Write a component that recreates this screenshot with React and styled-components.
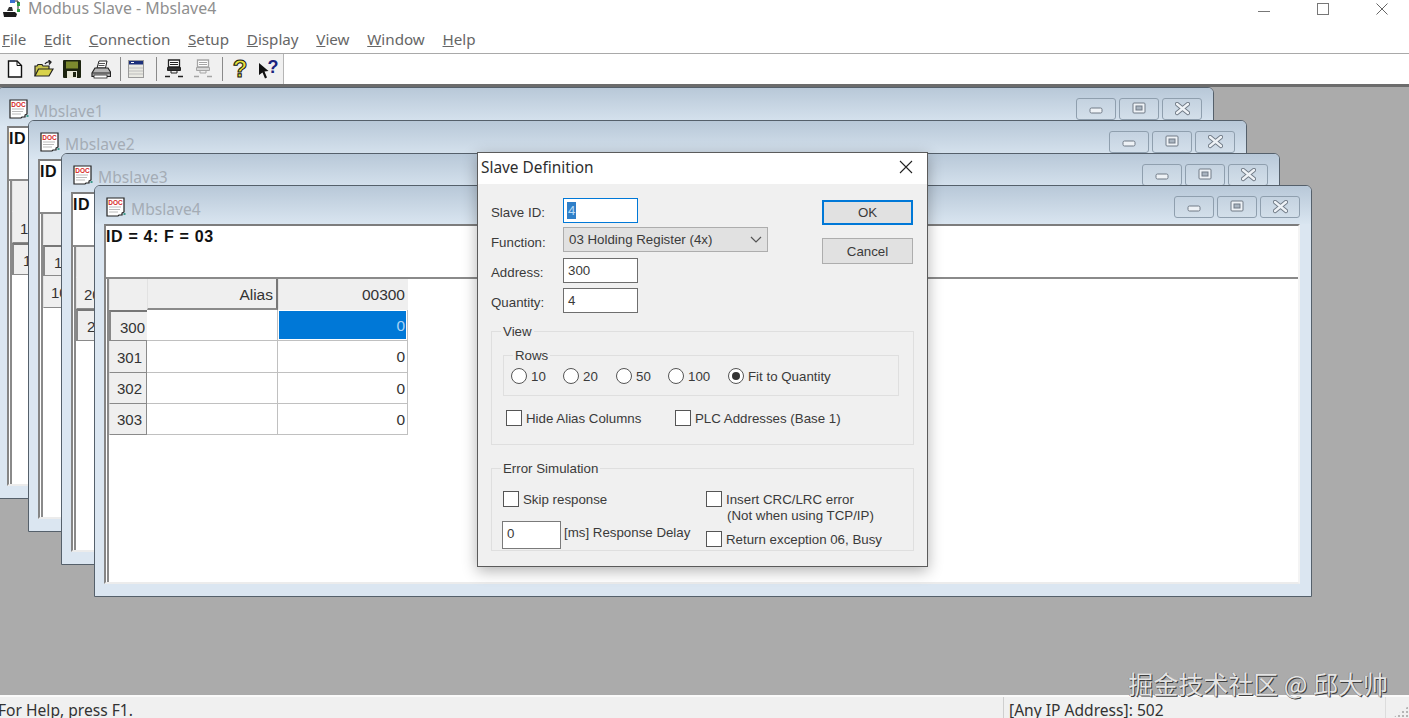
// Packages
import styled, { createGlobalStyle } from 'styled-components';

const MENUS = ['File', 'Edit', 'Connection', 'Setup', 'Display', 'View', 'Window', 'Help'];

const SLAVES = [
  { name: 'Mbslave1', id: 1, base: 100, left: -3, top: 0, width: 1217, selected: 1 },
  { name: 'Mbslave2', id: 2, base: 100, left: 28, top: 33, width: 1219, selected: 0 },
  { name: 'Mbslave3', id: 3, base: 200, left: 61, top: 66, width: 1219, selected: 1 },
  { name: 'Mbslave4', id: 4, base: 300, left: 94, top: 98, width: 1218, selected: 0, rows: 4 },
];

const RADIOS = [
  { label: '10', width: 52 },
  { label: '20', width: 53 },
  { label: '50', width: 52 },
  { label: '100', width: 60 },
  { label: 'Fit to Quantity', width: 120, checked: true },
];

// Icons
const AppIcon = () => (
  <svg width="18" height="17" viewBox="0 0 18 17">
    <path d="M0 12h12l2 2-1 3H1z" fill="#1c1c1c" />
    <path d="M4 11l2-4h3l1 4z" fill="#333" />
    <rect x="7" y="0" width="5" height="3" fill="#3a6fd0" />
    <rect x="14" y="2" width="3" height="4" fill="#2f9e44" />
    <rect x="14" y="9" width="3" height="3" fill="#2f9e44" />
    <path d="M12 1h3v2M15 6v3" fill="none" stroke="#222" />
  </svg>
);

const NewIcon = () => (
  <svg width="16" height="18" viewBox="0 0 16 18">
    <path d="M1.500 1h8.500l4.500 4.500V17h-13z" fill="#fff" stroke="#111" strokeWidth="1.400" />
    <path d="M10 1v4.500h4.500" fill="none" stroke="#111" />
  </svg>
);

const OpenIcon = () => (
  <svg width="20" height="18" viewBox="0 0 20 18">
    <path d="M1 16V6h2l1-1.500h4L9 6h6v3" fill="#c9c44d" stroke="#222" strokeWidth="1.200" />
    <path d="M1 16l3.500-7H19l-4 7z" fill="#d8d24a" stroke="#222" strokeWidth="1.200" />
    <path d="M11 4c1-2 3-2.500 5-2M14.500 0l2.500 2-2 2.500" fill="none" stroke="#222" strokeWidth="1.300" />
  </svg>
);

const SaveIcon = () => (
  <svg width="18" height="18" viewBox="0 0 18 18">
    <rect width="18" height="18" rx="1" fill="#1d2410" />
    <rect x="3" y="1.500" width="12" height="7" fill="#7c8a2e" />
    <rect x="4" y="11" width="10" height="7" fill="#e8e8d8" />
    <rect x="10" y="12" width="3" height="5" fill="#1d2410" />
  </svg>
);

const PrintIcon = () => (
  <svg width="20" height="19" viewBox="0 0 20 19">
    <path d="M6 8l2-7h8l-1.500 7z" fill="#fff" stroke="#222" />
    <path d="M8 3.500h6M7.500 5.500h6" stroke="#555" />
    <path d="M1 13l3-5h13l2.500 4v4.500H1z" fill="#b5b5b5" stroke="#222" strokeWidth="1.200" />
    <path d="M1.500 13h17.500" stroke="#222" />
    <rect x="3" y="15" width="13" height="3" fill="#fff" stroke="#222" strokeWidth=".8" />
  </svg>
);

const FormIcon = () => (
  <svg width="16" height="18" viewBox="0 0 16 18">
    <rect x=".5" y=".5" width="15" height="17" fill="#e9e9e2" stroke="#9a9a9a" />
    <rect x="1" y="1" width="14" height="3.500" fill="#1b2f7a" />
    <path d="M3 2.500h3" stroke="#fff" />
    <path d="M1 8h14M1 11h14M1 14h14" stroke="#bdbdbd" />
  </svg>
);

const LinkIcon = ({ color, base }) => (
  <svg width="20" height="20" viewBox="0 0 20 20">
    <path d="M4.500 1h11v7h-11z" fill="#fff" stroke={color} strokeWidth="1.300" />
    <path d="M6 3.500h8M6 5.500h8" stroke={color} />
    <path d="M3.500 8.500h13v3h-13z" fill={base} stroke={color} />
    <path d="M7 12v2h6v-2" fill="none" stroke={color} />
    <path d="M1 17.500h5M14 17.500h5" stroke={color} strokeWidth="1.500" />
  </svg>
);

const HelpIcon = () => (
  <svg width="16" height="24" viewBox="0 0 16 24">
    <text x="8" y="20" textAnchor="middle" fontFamily="Liberation Sans" fontWeight="700" fontSize="24" fill="#e6e23a" stroke="#111" strokeWidth="1">?</text>
  </svg>
);

const WhatsThisIcon = () => (
  <svg width="21" height="22" viewBox="0 0 21 22">
    <path d="M1 5l9.500 8-4 .5 2.500 6-2 1-2.500-6L1 17z" fill="#111" />
    <text x="15" y="15" textAnchor="middle" fontFamily="Liberation Sans" fontWeight="700" fontSize="18" fill="#1a237e">?</text>
  </svg>
);

const DocIcon = () => (
  <svg width="20" height="20" viewBox="0 0 20 20">
    <path d="M1 1h17v14l-2 1v2h-3l-1 1H1z" fill="#fff" stroke="#222" strokeWidth="1.200" />
    <text x="9.500" y="7.500" textAnchor="middle" fontFamily="Liberation Sans" fontWeight="700" fontSize="6.500" fill="#d61f26">DOC</text>
    <path d="M3 10h12M3 12.500h11M3 15h9" stroke="#bbb" />
    <rect x="17.500" y="16" width="2" height="2" fill="#3d9a8b" />
  </svg>
);

const ButtonGlyph = ({ kind }) => {
  if (kind === 'min') {
    return (
      <svg width="14" height="14" viewBox="0 0 14 14">
        <rect x="1" y="6" width="12" height="5" rx="1.500" fill="#eef2f6" stroke="#707a86" />
      </svg>
    );
  }
  if (kind === 'max') {
    return (
      <svg width="14" height="14" viewBox="0 0 14 14">
        <rect x="1" y="1" width="12" height="10" rx="1" fill="#eef2f6" stroke="#707a86" />
        <rect x="4" y="4" width="6" height="4" fill="#a9b4c0" stroke="#707a86" />
      </svg>
    );
  }
  return (
    <svg width="15" height="14" viewBox="0 0 15 14">
      <path d="M2 2l11 9M13 2L2 11" stroke="#707a86" strokeWidth="4.200" strokeLinecap="round" />
      <path d="M2 2l11 9M13 2L2 11" stroke="#eef2f6" strokeWidth="2.400" strokeLinecap="round" />
    </svg>
  );
};

const GridRow = ({ label, selected }) => (
  <>
    <RowHead $selected={selected}>{label}</RowHead>
    <DataCell />
    <DataCell $selected={selected}>0</DataCell>
  </>
);

const SlaveWindow = ({ name, id, base, left, top, width, selected, rows = 2 }) => (
  <WindowFrame style={{ left, top, width }}>
    <WindowTitle>
      <DocIcon />
      <WindowName>{name}</WindowName>
      <WindowButtons>
        <WindowButton><ButtonGlyph kind="min" /></WindowButton>
        <WindowButton><ButtonGlyph kind="max" /></WindowButton>
        <WindowButton><ButtonGlyph kind="close" /></WindowButton>
      </WindowButtons>
    </WindowTitle>
    <Client>
      <InfoLine>{`ID = ${id}: F = 03`}</InfoLine>
      <GridPane>
        <DataGrid>
          <HeadCell />
          <HeadCell $raised>Alias</HeadCell>
          <HeadCell>{String(base).padStart(5, '0')}</HeadCell>
          {Array.from({ length: rows }, (_, i) => (
            <GridRow key={i} label={base + i} selected={i === selected} />
          ))}
        </DataGrid>
      </GridPane>
    </Client>
  </WindowFrame>
);

const Check = ({ children }) => (
  <CheckRow>
    <CheckBox />
    <CheckText>{children}</CheckText>
  </CheckRow>
);

const App = () => (
  <Page>
    <GlobalStyle />
    <TitleBar>
      <AppIcon />
      <AppName>Modbus Slave - Mbslave4</AppName>
      <Controls>
        <svg width="12" height="12" viewBox="0 0 12 12"><path d="M0 8.500h12" stroke="#777" /></svg>
        <svg width="12" height="12" viewBox="0 0 12 12"><rect x=".5" y=".5" width="11" height="11" fill="none" stroke="#777" /></svg>
        <svg width="12" height="12" viewBox="0 0 12 12"><path d="M.5.5l11 11M11.500.5l-11 11" stroke="#666" /></svg>
      </Controls>
    </TitleBar>
    <MenuBar>
      {MENUS.map((m) => (
        <MenuItem key={m}><u>{m[0]}</u>{m.slice(1)}</MenuItem>
      ))}
    </MenuBar>
    <ToolBar>
      <ToolStrip>
        <Tool><NewIcon /></Tool>
        <Tool><OpenIcon /></Tool>
        <Tool><SaveIcon /></Tool>
        <Tool><PrintIcon /></Tool>
        <ToolSep $after={1} />
        <Tool><FormIcon /></Tool>
        <ToolSep $before={5.5} />
        <Tool><LinkIcon color="#222" base="#333" /></Tool>
        <Tool><LinkIcon color="#a5a5a5" base="#d8d8d8" /></Tool>
        <ToolSep $before={4.5} />
        <Tool><HelpIcon /></Tool>
        <Tool><WhatsThisIcon /></Tool>
      </ToolStrip>
    </ToolBar>
    <Desktop>
      {SLAVES.map((s) => <SlaveWindow key={s.name} {...s} />)}
    </Desktop>
    <StatusBar>
      <StatusHelp>For Help, press F1.</StatusHelp>
      <StatusPort>[Any IP Address]: 502</StatusPort>
      <StatusGrip />
    </StatusBar>

    <Watermark>掘金技术社区 @ 邱大帅</Watermark>

    <Dialog>
      <DialogTitle>
        <span>Slave Definition</span>
        <svg width="14" height="14" viewBox="0 0 14 14"><path d="M1 1l12 12M13 1L1 13" stroke="#222" strokeWidth="1.100" /></svg>
      </DialogTitle>
      <DialogBody>
        <TopSection>
          <FieldGrid>
            <FieldLabel>Slave ID:</FieldLabel>
            <TextField $focused><Selected>4</Selected></TextField>
            <FieldLabel>Function:</FieldLabel>
            <SelectField>
              <span>03 Holding Register (4x)</span>
              <svg width="12" height="8" viewBox="0 0 12 8"><path d="M1 1l5 5 5-5" fill="none" stroke="#555" strokeWidth="1.200" /></svg>
            </SelectField>
            <FieldLabel>Address:</FieldLabel>
            <TextField>300</TextField>
            <FieldLabel>Quantity:</FieldLabel>
            <TextField>4</TextField>
          </FieldGrid>
          <ButtonColumn>
            <DialogButton $primary>OK</DialogButton>
            <DialogButton>Cancel</DialogButton>
          </ButtonColumn>
        </TopSection>

        <ViewGroup>
          <Legend>View</Legend>
          <RowsGroup>
            <Legend>Rows</Legend>
            {RADIOS.map((r) => (
              <RadioItem key={r.label} $width={r.width}>
                <Radio $checked={r.checked} />
                <CheckText>{r.label}</CheckText>
              </RadioItem>
            ))}
          </RowsGroup>
          <ViewChecks>
            <CheckSlot $width={169}><Check>Hide Alias Columns</Check></CheckSlot>
            <Check>PLC Addresses (Base 1)</Check>
          </ViewChecks>
        </ViewGroup>

        <ErrorGroup>
          <Legend>Error Simulation</Legend>
          <ErrorLeft>
            <Check>Skip response</Check>
            <DelayRow>
              <DelayField>0</DelayField>
              <DelayLabel>[ms] Response Delay</DelayLabel>
            </DelayRow>
          </ErrorLeft>
          <ErrorRight>
            <Check>
              Insert CRC/LRC error
              <CheckNote>(Not when using TCP/IP)</CheckNote>
            </Check>
            <Check>Return exception 06, Busy</Check>
          </ErrorRight>
        </ErrorGroup>
      </DialogBody>
    </Dialog>
  </Page>
);

const GlobalStyle = createGlobalStyle`
  html, body {
    margin: 0;
    height: 100%;
    overflow: hidden;
    background: #fff;
  }
  * {
    box-sizing: border-box;
  }
`;

const Page = styled.div`
  position: relative;
  width: 1409px;
  height: 718px;
  overflow: hidden;

  display: flex;
  flex-direction: column;

  font-family: 'Liberation Sans', Arial, sans-serif;
`;

const TitleBar = styled.div`
  height: 17px;
  padding: 0 21px 0 3px;
  flex-shrink: 0;

  display: flex;
  align-items: center;
  background: #fff;
`;

const AppName = styled.span`
  margin-left: 7px;
  font-family: 'Noto Sans', sans-serif;
  font-size: 15.9px;
  line-height: 17px;
  color: #8f8f8f;
`;

const Controls = styled.div`
  margin-left: auto;
  display: flex;
  gap: 47px;
`;

const MenuBar = styled.div`
  height: 37px;
  padding: 7px 0 0 2px;
  flex-shrink: 0;

  display: flex;
  align-items: center;
  gap: 17.7px;

  background: #fff;
  border-bottom: 1px solid #a9a9a9;
`;

const MenuItem = styled.span`
  font-family: 'Noto Sans', sans-serif;
  font-size: 15.2px;
  color: #666;
`;

const ToolBar = styled.div`
  height: 33px;
  flex-shrink: 0;
  background: #fff;
  border-bottom: 3px solid #6c6c6c;
`;

const ToolStrip = styled.div`
  width: 284px;
  height: 100%;
  padding-left: 1px;

  display: flex;
  align-items: center;

  background: #f0f0f0;
  border-right: 1px solid #b5b5b5;
`;

const Tool = styled.div`
  width: 28.5px;
  height: 100%;

  display: flex;
  align-items: center;
  justify-content: center;
`;

const ToolSep = styled.div`
  width: 1px;
  height: 24px;
  margin-left: ${(p) => p.$before ?? 5}px;
  margin-right: ${(p) => p.$after ?? 3}px;
  background: #8a8a8a;
`;

const Desktop = styled.div`
  position: relative;
  flex: 1;
  overflow: hidden;
  background: #ababab;
`;

const WindowFrame = styled.div`
  position: absolute;
  height: 412px;
  padding: 0 11px 12px 9px;

  display: flex;
  flex-direction: column;

  background: #dbe6f1;
  border: 1px solid #55606b;
  border-radius: 6px 6px 0 0;
`;

const WindowTitle = styled.div`
  height: 38px;
  margin: 0 -11px 0 -9px;
  padding: 4px 11px 0 11px;
  flex-shrink: 0;

  display: flex;
  align-items: center;
  gap: 5px;

  background: linear-gradient(#b8c8d8, #d9e5f0);
  border-radius: 5px 5px 0 0;
`;

const WindowName = styled.span`
  margin-top: 3px;
  font-family: 'Noto Sans', sans-serif;
  font-size: 15.6px;
  color: #a4acb5;
`;

const WindowButtons = styled.div`
  margin-left: auto;
  display: flex;
  gap: 3px;
`;

const WindowButton = styled.div`
  width: 40px;
  height: 22px;

  display: flex;
  align-items: center;
  justify-content: center;

  background: linear-gradient(#c4d2e0, #d3dfea);
  border: 1px solid #8f9fae;
  border-radius: 3px;
`;

const Client = styled.div`
  flex: 1;
  min-height: 0;
  display: flex;
  flex-direction: column;

  background: #fff;
  border: 2px solid;
  border-color: #7d7d7d #f4f4f4 #ececec #858585;
`;

const InfoLine = styled.div`
  height: 53px;
  padding-top: 2px;
  flex-shrink: 0;

  font-size: 16px;
  font-weight: 700;
  letter-spacing: 0.65px;
  line-height: 18px;
  color: #111;
  border-bottom: 2px solid #8a8a8a;
`;

const GridPane = styled.div`
  flex: 1;
  margin-left: 1px;
  border-left: 2px solid #8a8a8a;
`;

const DataGrid = styled.div`
  display: grid;
  grid-template-columns: 38px 131px 130px;
  grid-auto-rows: 31.2px;
  width: 299px;

  font-size: 15.5px;
  color: #333;
`;

const HeadCell = styled.div`
  padding: 2px 3px 0 0;

  display: flex;
  align-items: center;
  justify-content: flex-end;

  background: #efefef;
  border-right: ${(p) => (p.$raised ? '2px solid #777' : '0')};
  border-bottom: 2px solid ${(p) => (p.$raised ? '#8a8a8a' : '#efefef')};
  border-left: 1px solid #e2e2e2;
`;

const RowHead = styled.div`
  padding: 2px ${(p) => (p.$selected ? '2px' : '4px')} 0 0;

  display: flex;
  align-items: center;
  justify-content: flex-end;

  font-size: 15px;
  background: #efefef;
  border-right: ${(p) => (p.$selected ? '0' : '1px solid #8a8a8a')};
  border-bottom: 1px solid #8a8a8a;
  border-top: ${(p) => (p.$selected ? '2px solid #777' : '0')};
  border-left: ${(p) => (p.$selected ? '2px solid #888' : '1px solid #e2e2e2')};
`;

const DataCell = styled.div`
  padding: 2px 2px 0 0;

  display: flex;
  align-items: center;
  justify-content: flex-end;

  color: ${(p) => (p.$selected ? '#a9d3f5' : '#333')};
  background: ${(p) => (p.$selected ? '#0078d7' : '#fff')};
  border-right: 1px solid #c0c0c0;
  border-bottom: 1px solid #c0c0c0;
  ${(p) => p.$selected && 'box-shadow: inset 0 0 0 1px #fff;'}
`;

const Watermark = styled.div`
  position: absolute;
  right: 21px;
  top: 668px;

  font-family: 'Noto Sans CJK SC', sans-serif;
  font-size: 25px;
  line-height: 30px;
  color: #e4e4e4;
  text-shadow: 1px 1px 0 #3c3c3c, -0.5px -0.5px 0 #777;
`;

const StatusBar = styled.div`
  height: 23px;
  flex-shrink: 0;

  display: flex;
  align-items: flex-end;

  font-family: 'Noto Sans', sans-serif;
  font-size: 15.6px;
  line-height: 17px;
  color: #333;
  background: #f0f0f0;
  border-top: 2px solid #fafafa;
`;

const StatusHelp = styled.span`
  width: 1005px;
  margin-left: -2px;
  margin-bottom: -1px;
  flex-shrink: 0;
`;

const StatusPort = styled.span`
  width: 383px;
  height: 100%;
  padding: 5px 0 0 5px;
  flex-shrink: 0;

  border-left: 1px solid #cfcfcf;
  border-right: 1px solid #dcdcdc;
`;

const StatusGrip = styled.span`
  flex: 1;
  height: 100%;
  background: radial-gradient(circle at 2px 2px, #b5b5b5 1px, transparent 1.2px) right bottom / 4px 4px;
  clip-path: polygon(100% 40%, 100% 100%, 30% 100%);
`;

const Dialog = styled.div`
  position: absolute;
  left: 477px;
  top: 152px;
  width: 451px;
  height: 415px;

  display: flex;
  flex-direction: column;

  background: #f0f0f0;
  border: 1px solid #5b5b5b;
  box-shadow: 0 4px 14px rgba(0, 0, 0, 0.3);
  font-size: 13.3px;
  color: #3a3a3a;
`;

const DialogTitle = styled.div`
  height: 31px;
  padding: 0 14px 3px 3px;
  flex-shrink: 0;

  display: flex;
  align-items: center;
  justify-content: space-between;

  font-family: 'Noto Sans', sans-serif;
  font-size: 15.4px;
  color: #2e2e2e;
  background: #fff;
`;

const DialogBody = styled.div`
  flex: 1;
  padding: 14px 13px 0;
  display: flex;
  flex-direction: column;
`;

const TopSection = styled.div`
  display: flex;
  justify-content: space-between;
`;

const FieldGrid = styled.div`
  display: grid;
  grid-template-columns: 72px auto;
  grid-auto-rows: 25px;
  row-gap: 5px;
  align-items: center;
`;

const FieldLabel = styled.span`
  padding-top: 4px;
`;

const TextField = styled.div`
  width: 75px;
  height: 25px;
  padding: 0 0 1px ${(p) => (p.$focused ? '3px' : '4px')};

  display: flex;
  align-items: center;

  background: #fff;
  border: 1px solid ${(p) => (p.$focused ? '#0078d7' : '#6e6e6e')};
`;

const Selected = styled.span`
  padding: 0 1px;
  line-height: 17px;
  color: #b9dcf7;
  background: #2f7fc8;
`;

const SelectField = styled.div`
  width: 205px;
  height: 25px;
  margin-top: -2px;
  padding: 0 5px 0 5px;

  display: flex;
  align-items: center;
  justify-content: space-between;

  background: #e1e1e1;
  border: 1px solid #adadad;
`;

const ButtonColumn = styled.div`
  margin: 2px 1px 0 0;
  display: flex;
  flex-direction: column;
  gap: 13px;
`;

const DialogButton = styled.div`
  width: 91px;
  height: ${(p) => (p.$primary ? '25px' : '26px')};

  display: flex;
  align-items: center;
  justify-content: center;

  background: #e1e1e1;
  border: ${(p) => (p.$primary ? '2px solid #0078d7' : '1px solid #adadad')};
`;

const Group = styled.div`
  position: relative;
  border: 1px solid #dfdfdf;
`;

const Legend = styled.span`
  position: absolute;
  top: -9px;
  left: 9px;
  padding: 0 2px;
  line-height: 18px;
  background: #f0f0f0;
`;

const ViewGroup = styled(Group)`
  height: 114px;
  margin-top: 18px;
  padding: 23px 14px 0 11px;
`;

const RowsGroup = styled(Group)`
  height: 41px;
  padding-left: 7px;

  display: flex;
  align-items: center;
`;

const RadioItem = styled.label`
  width: ${(p) => p.$width}px;
  flex-shrink: 0;

  display: flex;
  align-items: center;
  gap: 4px;
`;

const Radio = styled.span`
  width: 16px;
  height: 16px;
  flex-shrink: 0;

  display: flex;
  align-items: center;
  justify-content: center;

  background: #fff;
  border: 1px solid #555;
  border-radius: 50%;

  &::after {
    content: '';
    width: 8px;
    height: 8px;
    border-radius: 50%;
    background: ${(p) => (p.$checked ? '#333' : 'transparent')};
  }
`;

const ViewChecks = styled.div`
  margin-top: 14px;
  padding-left: 3px;
  display: flex;
`;

const CheckSlot = styled.div`
  width: ${(p) => p.$width}px;
`;

const CheckRow = styled.div`
  display: flex;
  align-items: flex-start;
  gap: 4px;
  line-height: 16px;
`;

const CheckText = styled.span`
  padding-top: 1px;
`;

const CheckNote = styled.span`
  display: block;
  padding-left: 1px;
`;

const CheckBox = styled.span`
  width: 16px;
  height: 16px;
  flex-shrink: 0;
  background: #fff;
  border: 1px solid #555;
`;

const ErrorGroup = styled(Group)`
  height: 83px;
  margin-top: 23px;
  padding: 22px 0 0 10px;
  display: flex;
`;

const ErrorLeft = styled.div`
  width: 204px;
  padding-left: 1px;

  display: flex;
  flex-direction: column;
  gap: 13px;
`;

const DelayRow = styled.div`
  margin-left: -1px;
  display: flex;
  align-items: center;
  gap: 3px;
`;

const DelayLabel = styled.span`
  margin-top: -5px;
`;

const DelayField = styled.div`
  width: 59px;
  height: 28px;
  padding: 0 0 4px 4px;

  display: flex;
  align-items: center;

  background: #fff;
  border: 1px solid #7a7a7a;
`;

const ErrorRight = styled.div`
  display: flex;
  flex-direction: column;
  gap: 7px;
`;

export default App;
